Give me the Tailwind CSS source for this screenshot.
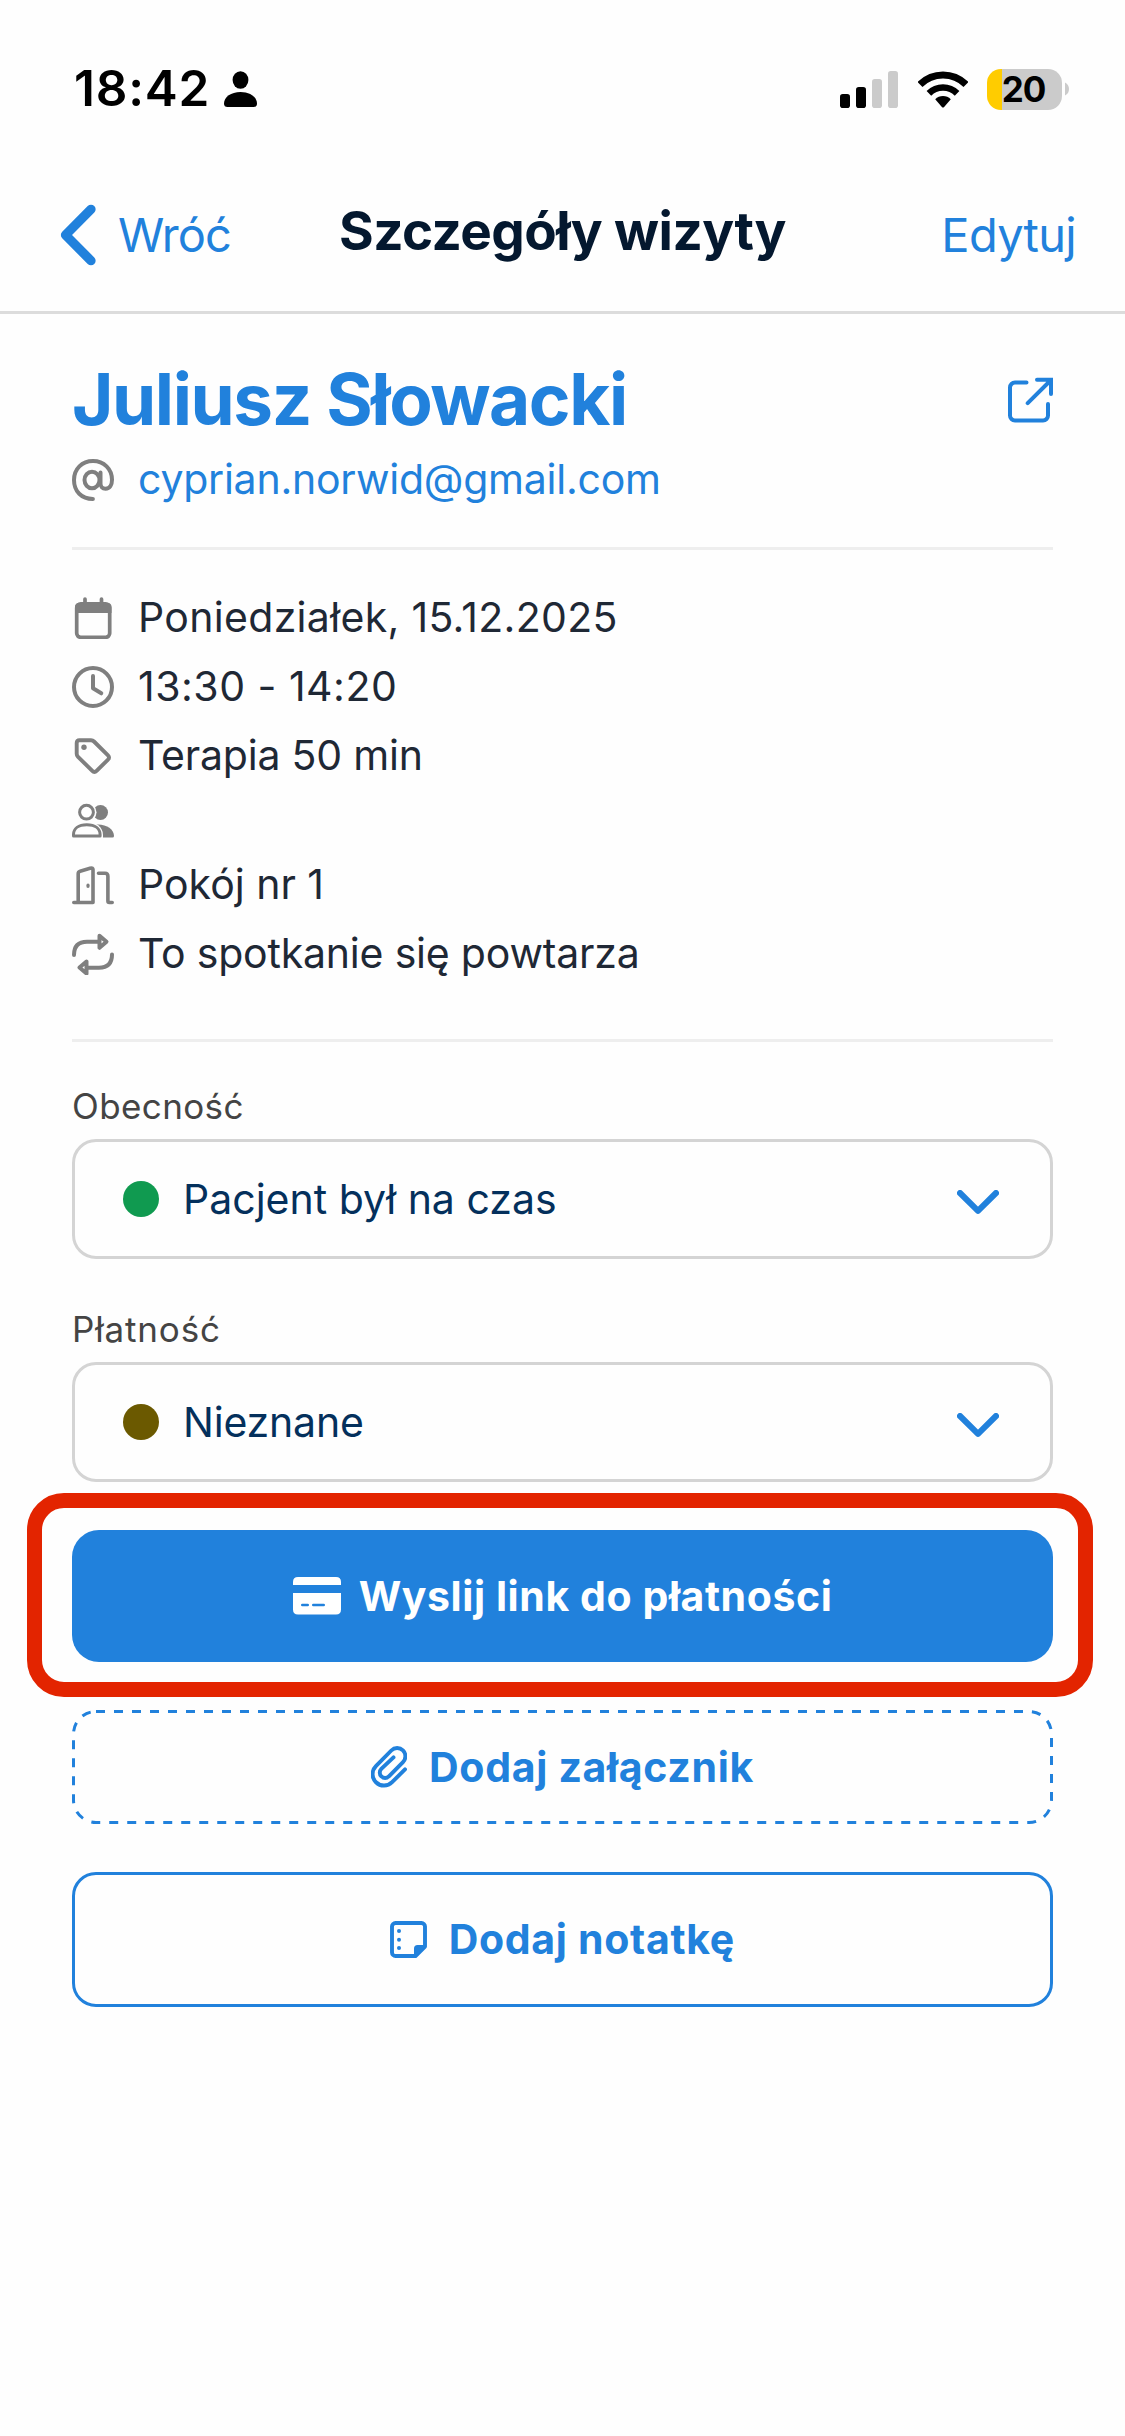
<!DOCTYPE html>
<html lang="pl">
<head>
<meta charset="utf-8">
<title>Szczegóły wizyty</title>
<script src="https://cdn.jsdelivr.net/npm/@tailwindcss/browser@4"></script>
</head>
<body class="min-h-screen bg-[#fefefe] font-['Inter',sans-serif] text-[41px] leading-none text-[#1f2835]">

  <!-- Status bar -->
  <div class="flex h-[178px] items-center justify-between pr-[56px] pl-[74px] text-black">
    <div class="flex items-center">
      <span class="text-[49.500px] font-semibold tracking-[0.800px]">18:42</span>
      <svg class="ml-[14px] h-[36px] w-[33px]" viewBox="0 0 33 36" fill="currentColor">
        <ellipse cx="16.5" cy="9" rx="7.9" ry="8.8"/>
        <path d="M0 32.500C0 26 7 21 16.500 21S33 26 33 32.500C33 35 31.800 36 29.500 36H3.500C1.200 36 0 35 0 32.500z"/>
      </svg>
    </div>
    <div class="flex items-center">
      <svg class="h-[37px] w-[58px]" viewBox="0 0 58 37">
        <rect x="0" y="23" width="10" height="14" rx="2.800"/>
        <rect x="16" y="16" width="10" height="21" rx="2.800"/>
        <rect x="32" y="8" width="10" height="29" rx="2.800" fill="#cbcbcb"/>
        <rect x="48" y="0" width="10" height="37" rx="2.800" fill="#cbcbcb"/>
      </svg>
      <svg class="ml-[19.500px] h-[37px] w-[50px]" viewBox="0 0 50 37">
        <g fill="none" stroke="#000">
          <path stroke-width="7" d="M2 13.500A32.500 32.500 0 0 1 48 13.500"/>
          <path stroke-width="6.500" d="M10.900 22.400A20 20 0 0 1 39.100 22.400"/>
        </g>
        <path d="M17.200 28.200A11 11 0 0 1 32.800 28.200L25.900 36.200Q25 37 24.100 36.200z"/>
      </svg>
      <div class="ml-[19.500px] flex h-[41px] w-[75px] items-center justify-center rounded-[14px] bg-linear-to-r from-[#ffcc00] from-[15px] to-[#cbcbcb] to-[15px] pr-[2px] text-[35px] font-bold tracking-[-1px]">20</div>
      <svg class="ml-[3px] h-[14px] w-[4px]" viewBox="0 0 4 14"><path d="M0 0.500Q4 2.500 4 7T0 13.500z" fill="#cbcbcb"/></svg>
    </div>
  </div>

  <!-- Navigation -->
  <div class="grid h-[136px] grid-cols-[1fr_auto_1fr] items-center border-b-3 border-[#dcdcdc] px-[49px] pb-[20px] text-[47px] text-[#2181dc]">
    <div class="flex items-center pl-[11px]">
      <svg class="h-[62px] w-[36px]" viewBox="0 0 36 62" fill="none" stroke="currentColor" stroke-width="9.300" stroke-linecap="round" stroke-linejoin="round"><path d="M31 5.300L5.500 31 31 56.700"/></svg>
      <span class="ml-[22px] tracking-[-0.940px]">Wróć</span>
    </div>
    <h1 class="pb-[7px] text-[53px] font-bold tracking-[-0.530px] text-[#04182f]">Szczegóły wizyty</h1>
    <span class="justify-self-end tracking-[-0.710px]">Edytuj</span>
  </div>

  <main class="flex flex-col px-[72px] pt-[43px]">
    <!-- Patient -->
    <div class="flex h-[85px] items-center justify-between text-[#2181dc]">
      <h2 class="text-[71px] font-bold tracking-[-1.420px]">Juliusz Słowacki</h2>
      <svg class="size-[48px]" viewBox="0 0 48 48" fill="none" stroke="currentColor" stroke-width="4" stroke-linecap="round">
        <path d="M21.500 6.500H10a5 5 0 0 0-5 5V39.500a5 5 0 0 0 5 5H38a5 5 0 0 0 5-5V28"/>
        <path d="M22.700 27.200L45.500 4.500M32 3.700H46V18"/>
      </svg>
    </div>
    <div class="mt-[3px] flex h-[69px] items-center gap-6">
      <svg class="size-[42px] text-[#7f7f7f]" viewBox="0 0 42 42" fill="none" stroke="currentColor" stroke-width="4" stroke-linecap="round">
        <ellipse cx="20" cy="21" rx="7.500" ry="8.300"/>
        <path d="M28.500 13.500V24.500c0 3.300 2 5.200 5 5.200 4.400 0 6.500-3.900 6.500-8.900C40 9.900 31.900 2 21 2 10 2 2 10 2 21c0 11.400 7.600 19 18.900 19"/>
      </svg>
      <span class="tracking-[-0.230px] text-[#2181dc]">cyprian.norwid@gmail.com</span>
    </div>

    <!-- Visit details -->
    <div class="mt-[33px] border-t-3 border-[#eeeeee] pt-[33px] pb-[51px]">
      <div class="flex h-[69px] items-center gap-6">
        <svg class="size-[42px] text-[#7f7f7f]" viewBox="0 0 42 42" fill="none" stroke="currentColor" stroke-width="3.700" stroke-linecap="round">
          <rect x="4.700" y="6.800" width="33" height="33.500" rx="4"/>
          <path d="M3 10a4 4 0 0 1 4-4H35.500a4 4 0 0 1 4 4V16H3z" fill="currentColor" stroke="none"/>
          <path d="M13 2V8M29.500 2V8"/>
        </svg>
        <span class="tracking-[0.320px]">Poniedziałek, 15.12.2025</span>
      </div>
      <div class="flex h-[69px] items-center gap-6">
        <svg class="size-[42px] text-[#7f7f7f]" viewBox="0 0 42 42" fill="none" stroke="currentColor" stroke-width="4" stroke-linecap="round" stroke-linejoin="round">
          <circle cx="21" cy="21" r="19"/>
          <path d="M21 10V22.300L29.300 27.300"/>
        </svg>
        <span class="tracking-[0.500px]">13:30 - 14:20</span>
      </div>
      <div class="flex h-[69px] items-center gap-6">
        <svg class="size-[42px] text-[#7f7f7f]" viewBox="0 0 42 42" fill="none" stroke="currentColor" stroke-width="3.900">
          <path d="M7.300 5.300H19c1.200 0 2.200.4 3 1.200L36 20.300c1.400 1.400 1.400 3 0 4.300L24.600 35.900c-1.400 1.400-3 1.400-4.300 0L5.800 21.600c-.8-.8-1.100-1.700-1.100-2.800V7.900c0-1.700.9-2.600 2.600-2.600z"/>
          <circle cx="12" cy="12.300" r="2.700" fill="currentColor" stroke="none"/>
        </svg>
        <span class="tracking-[-0.200px]">Terapia 50 min</span>
      </div>
      <div class="flex h-[60px] items-center gap-6">
        <svg class="size-[42px] text-[#7f7f7f]" viewBox="0 0 42 42">
          <circle cx="28.500" cy="13.500" r="7.500" fill="currentColor"/>
          <path d="M18 26.500Q22 25.500 26 25.500C35 25.500 42 30.500 42 37Q42 38.500 40.500 38.500H18z" fill="currentColor"/>
          <circle cx="14.500" cy="13.200" r="10" fill="#fefefe"/>
          <path d="M0 39V35C0 27.500 6 23 14.800 23S31 27.500 31 36V39z" fill="#fefefe"/>
          <g fill="none" stroke="currentColor" stroke-width="3" stroke-linejoin="round">
            <circle cx="14.500" cy="13.200" r="6.900"/>
            <path d="M1.500 37V35.500C1.500 29.500 6.500 25.700 14.800 25.700S28.100 29.500 28.100 35.500V37z"/>
          </g>
        </svg>
      </div>
      <div class="flex h-[69px] items-center gap-6">
        <svg class="size-[42px] text-[#7f7f7f]" viewBox="0 0 42 42" fill="none" stroke="currentColor" stroke-width="3.600" stroke-linecap="round" stroke-linejoin="round">
          <path d="M1.800 38.500H21V5.600c0-1.300-.9-1.900-2.100-1.500L8.100 7.300c-1.300.4-1.900 1.200-1.900 2.500V38.500"/>
          <path d="M26.500 9.300H33c2 0 2.900.9 2.900 2.900V37c0 1 .4 1.500 1.500 1.500H40.200"/>
          <ellipse cx="16" cy="21.700" rx="1.700" ry="2.300" fill="currentColor" stroke="none"/>
        </svg>
        <span>Pokój nr 1</span>
      </div>
      <div class="flex h-[69px] items-center gap-6">
        <svg class="size-[42px] text-[#7f7f7f]" viewBox="0 0 42 42" fill="none" stroke="currentColor" stroke-width="4" stroke-linecap="round" stroke-linejoin="round">
          <path d="M2 22C2 13.500 6.500 8.800 15 8.800H27M27.500 2.800L34.500 8.800 27.500 14.800z"/>
          <path d="M40 21.500C40 30 35.500 34.700 27 34.700H15M14.500 40.500L7.500 34.500 14.500 28.500z"/>
        </svg>
        <span class="tracking-[-0.200px]">To spotkanie się powtarza</span>
      </div>
    </div>

    <!-- Attendance and payment -->
    <div class="flex flex-col gap-[46px] border-t-3 border-[#eeeeee] pt-[40px] text-[#04305c]">
      <div class="flex flex-col gap-2">
        <label class="text-[35px] leading-[49px] tracking-[0.390px] text-[#444444]">Obecność</label>
        <div class="flex h-[120px] items-center rounded-[24px] border-3 border-[#d4d4d4] pr-[51px] pl-[48px]">
          <span class="size-[36px] rounded-full bg-[#109a50]"></span>
          <span class="ml-6">Pacjent był na czas</span>
          <svg class="mt-[6px] ml-auto h-[24px] w-[42px] text-[#2181dc]" viewBox="0 0 42 24" fill="none" stroke="currentColor" stroke-width="6" stroke-linecap="round" stroke-linejoin="round"><path d="M3 3L21 20.800 39 3"/></svg>
        </div>
      </div>
      <div class="flex flex-col gap-2">
        <label class="text-[35px] leading-[49px] tracking-[0.850px] text-[#444444]">Płatność</label>
        <div class="flex h-[120px] items-center rounded-[24px] border-3 border-[#d4d4d4] pr-[51px] pl-[48px]">
          <span class="size-[36px] rounded-full bg-[#6b5900]"></span>
          <span class="ml-6 tracking-[-0.180px]">Nieznane</span>
          <svg class="mt-[6px] ml-auto h-[24px] w-[42px] text-[#2181dc]" viewBox="0 0 42 24" fill="none" stroke="currentColor" stroke-width="6" stroke-linecap="round" stroke-linejoin="round"><path d="M3 3L21 20.800 39 3"/></svg>
        </div>
      </div>
    </div>

    <!-- Actions -->
    <div class="mt-12 flex flex-col gap-12 font-bold text-[#2181dc]">
      <div class="relative">
        <button class="flex h-[132px] w-full items-center justify-center gap-[18px] rounded-[27px] bg-[#2181dc] text-white">
          <svg class="h-[38px] w-[48px]" viewBox="0 0 48 38">
            <path d="M0 8V5Q0 0 5 0H43Q48 0 48 5V8zM0 16H48V32.500Q48 37.500 43 37.500H5Q0 37.500 0 32.500z" fill="#fff"/>
            <path d="M9.300 28H14.700M20.300 28H30.700" stroke="#2181dc" stroke-width="2.600" stroke-linecap="round"/>
          </svg>
          <span class="tracking-[0.580px]">Wyslij link do płatności</span>
        </button>
        <!-- Red marker around the payment button -->
        <div class="pointer-events-none absolute -top-[37.500px] -right-[40px] -bottom-[35px] -left-[45px] rounded-[37px] border-[15px] border-[#e32400]"></div>
      </div>
      <button class="relative flex h-[114px] items-center justify-center gap-[22px]">
        <svg class="absolute inset-0 h-[114px] w-[981px]" viewBox="0 0 981 114" fill="none" stroke="currentColor"><rect x="1.500" y="1.500" width="978" height="111" rx="22.500" stroke-width="3" stroke-dasharray="9 9"/></svg>
        <svg class="h-[42px] w-[36px]" viewBox="0 0 36 42" fill="none" stroke="currentColor" stroke-width="3.900" stroke-linecap="round">
          <path d="M34 23.300L21.100 36.200A11.400 11.400 0 0 1 4.900 20.100L20.300 4.500A8.200 8.200 0 0 1 32 16.100L17.900 30.400A5.300 5.300 0 0 1 10.300 22.900L22.500 11.400"/>
        </svg>
        <span class="tracking-[0.680px]">Dodaj załącznik</span>
      </button>
      <button class="flex h-[135px] items-center justify-center gap-[21.500px] rounded-[24px] border-3 border-[#2181dc]">
        <svg class="size-[37px]" viewBox="0 0 37 37" fill="none" stroke="currentColor" stroke-width="3.900" stroke-linejoin="round">
          <path d="M25.500 35H5.500a3.500 3.500 0 0 1-3.500-3.500V5.500A3.500 3.500 0 0 1 5.500 2H31.500A3.500 3.500 0 0 1 35 5.500V25.500z"/>
          <path d="M24 36V27.500A3.500 3.500 0 0 1 27.500 24H36L26 36z" fill="currentColor" stroke="none"/>
          <g fill="currentColor" stroke="none"><circle cx="9" cy="10" r="2"/><circle cx="9" cy="18.700" r="2"/><circle cx="9" cy="27" r="2"/></g>
        </svg>
        <span class="tracking-[0.680px]">Dodaj notatkę</span>
      </button>
    </div>
  </main>
</body>
</html>
